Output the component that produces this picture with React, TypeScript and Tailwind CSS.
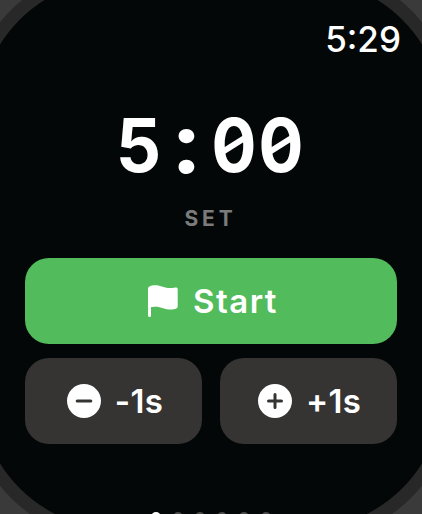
function FlagIcon() {
  return (
    <svg viewBox="0 0 30 32" className="w-[30px] h-8" fill="currentColor">
      <path d="M0 30.500V3.200C0 1.800 2.800.2 7 .2c6 0 9.500 2.900 15.500 2.900 2.500 0 4.500-.5 5.500-.5 1 0 1.700.7 1.700 1.700V21.500c0 1.700-2.500 3.100-6.700 3.100-6 0-9.800-2.900-15.700-2.900-2 0-3.500.2-4.300.6v8.200a1.500 1.500 0 0 1-3 0z" />
    </svg>
  )
}

function RoundIcon({ plus = false }: { plus?: boolean }) {
  return (
    <svg viewBox="0 0 34 34" className="size-[34px]" fill="none">
      <circle cx="17" cy="17" r="17" fill="white" />
      <path
        d={plus ? 'M10.500 17h13M17 10.500v13' : 'M10.200 17h13.600'}
        stroke="#353432"
        strokeWidth="3"
        strokeLinecap="round"
      />
    </svg>
  )
}

// zero with a shallow slash that stays inside the bowl
function Zero() {
  return (
    <span className="relative flex justify-center w-[47px]">
      <span className="scale-x-[0.9]">0</span>
      <i className="absolute left-[9px] top-[37px] w-[29px] h-[6px] -rotate-[32deg] bg-white" />
    </span>
  )
}

export default function App() {
  return (
    <div className="relative w-[422px] h-[514px] overflow-hidden bg-[#3a3a3a] font-['Inter',sans-serif] text-white">
      {/* watch case: the rounded screen is larger than the visible area */}
      <div className="absolute -inset-x-[34px] -top-[34px] -bottom-[28px] rounded-[152px] border-[13px] border-[#282828] bg-[#030707]" />

      <div className="relative flex flex-col h-full px-[25px] *:shrink-0">
        <div className="flex justify-end pt-[18px] -mr-[4px]">
          <span className="text-[35px] leading-[42px] font-medium">5:29</span>
        </div>

        <div className="flex flex-col items-center mt-[45px]">
          <div className="flex pr-[2px] text-[74px] leading-[80px] font-bold">
            <span className="flex justify-center w-[47px] pr-[2px] scale-x-[0.96]">5</span>
            <span className="flex justify-center w-[47px] scale-x-[1.25] scale-y-[1.14] -translate-y-[3px]">:</span>
            <Zero />
            <Zero />
          </div>
          <span className="mt-[22px] pr-[1px] text-[21px] leading-[24px] font-bold tracking-[3.800px] text-[#7b7b7b]">SET</span>
        </div>

        <button type="button" className="flex items-center justify-center gap-[15px] mt-[27px] pl-[4px] w-[372px] h-[86px] rounded-[24px] bg-[#52bb5b]">
          <FlagIcon />
          <span className="text-[33px] leading-10 font-semibold tracking-[1.5px]">Start</span>
        </button>

        <div className="flex gap-[18px] mt-[14px]">
          <button type="button" className="flex items-center justify-center gap-[14px] pl-[3px] w-[177px] h-[86px] rounded-[24px] bg-[#353432]">
            <RoundIcon />
            <span className="text-[33px] leading-10 font-semibold tracking-[0.3px]">-1s</span>
          </button>
          <button type="button" className="flex items-center justify-center gap-[14px] pl-[2px] w-[177px] h-[86px] rounded-[24px] bg-[#353432]">
            <RoundIcon plus />
            <span className="text-[33px] leading-10 font-semibold tracking-[0.3px]">+1s</span>
          </button>
        </div>

        <div className="flex justify-center gap-3 mt-[68px]">
          <i className="size-[10px] shrink-0 rounded-full bg-white" />
          <i className="size-[10px] shrink-0 rounded-full bg-[#4a4a4a]" />
          <i className="size-[10px] shrink-0 rounded-full bg-[#4a4a4a]" />
          <i className="size-[10px] shrink-0 rounded-full bg-[#4a4a4a]" />
          <i className="size-[10px] shrink-0 rounded-full bg-[#4a4a4a]" />
          <i className="size-[10px] shrink-0 rounded-full bg-[#4a4a4a]" />
        </div>
      </div>
    </div>
  )
}
